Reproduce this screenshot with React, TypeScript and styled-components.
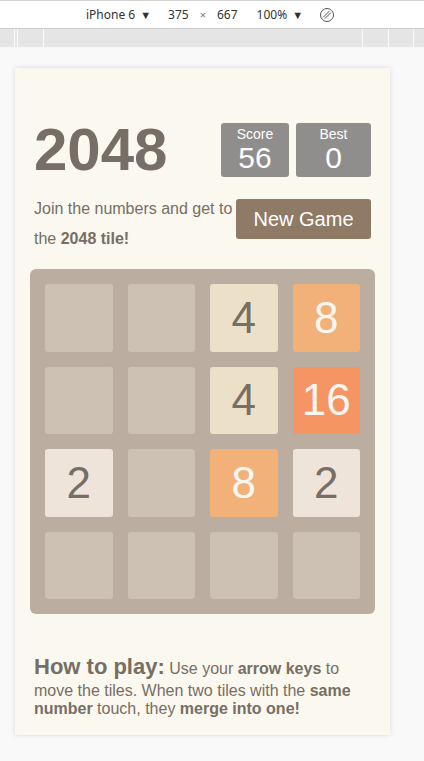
import styled, { createGlobalStyle } from "styled-components";

const GlobalStyle = createGlobalStyle`
  html, body {
    margin: 0;
    padding: 0;
    background: #f9f9f9;
  }
`;

const Page = styled.div`
  width: 424px;
  min-height: 761px;
  background: #f9f9f9;
  overflow: hidden;
`;

const Toolbar = styled.header`
  height: 27px;
  border-top: 1px solid #d2d2d2;
  border-bottom: 1px solid #cdcdcd;
  background: #fff;
  display: flex;
  align-items: center;
  padding-left: 86px;
  font-family: "Noto Sans", "Liberation Sans", sans-serif;
  font-size: 12px;
  color: #333;
`;

const ToolItem = styled.span<{ $gap?: number }>`
  display: inline-flex;
  align-items: center;
  margin-right: ${(p) => p.$gap ?? 0}px;
  white-space: nowrap;
`;

const Caret = styled.span`
  font-size: 11px;
  margin-left: 5px;
`;

const Times = styled.span`
  color: #777;
  font-size: 11px;
`;

const Ruler = styled.div`
  position: relative;
  height: 18px;
  background: #e5e5e5;
`;

const Mark = styled.span`
  position: absolute;
  top: 0;
  bottom: 0;
  width: 1px;
  background: #fbfbfb;
`;

const Stage = styled.div`
  padding-top: 21px;
`;

const Card = styled.main`
  box-sizing: border-box;
  width: 375px;
  height: 667px;
  margin-left: 15px;
  padding: 55px 15px 0;
  background: #faf8ef;
  box-shadow: 0 0 5px rgba(0, 0, 0, 0.13);
  font-family: "Liberation Sans", Arial, sans-serif;
  color: #776e65;
`;

const TopRow = styled.div`
  display: flex;
  justify-content: space-between;
  align-items: center;
  height: 54px;
  padding: 0 4px 0 4px;
`;

const Title = styled.h1`
  margin: 0;
  font-size: 60px;
  line-height: 60px;
  font-weight: bold;
`;

const Scores = styled.div`
  display: flex;
  gap: 7px;
`;

const ScoreBox = styled.div<{ $width: number }>`
  box-sizing: border-box;
  width: ${(p) => p.$width}px;
  height: 54px;
  padding-top: 3px;
  border-radius: 3px;
  background: #908d8d;
  color: #fff;
  text-align: center;
`;

const ScoreLabel = styled.div`
  font-size: 14px;
  line-height: 16px;
`;

const ScoreValue = styled.div`
  font-size: 30px;
  line-height: 32px;
`;

const SubRow = styled.div`
  display: flex;
  justify-content: space-between;
  align-items: flex-start;
  margin-top: 17px;
  padding: 0 4px;
`;

const Intro = styled.p`
  margin: 0;
  width: 200px;
  font-size: 16px;
  line-height: 30px;
`;

const NewGame = styled.button`
  width: 135px;
  height: 40px;
  margin-top: 5px;
  border: none;
  border-radius: 3px;
  background: #8f7a66;
  color: #fff;
  font-family: inherit;
  font-size: 20px;
  padding: 0;
`;

const Board = styled.div`
  box-sizing: border-box;
  width: 345px;
  height: 345px;
  margin-top: 15px;
  padding: 15px;
  display: grid;
  grid-template-columns: repeat(4, 1fr);
  grid-template-rows: repeat(4, 1fr);
  gap: 15px;
  background: #bbada0;
  border-radius: 6px;
`;

const tileColors: Record<number, [string, string]> = {
  0: ["#cdc1b4", "transparent"],
  2: ["#eee4da", "#776e65"],
  4: ["#ede0c8", "#776e65"],
  8: ["#f2b179", "#f9f6f2"],
  16: ["#f59563", "#f9f6f2"],
};

const Tile = styled.div<{ $value: number }>`
  display: flex;
  align-items: center;
  justify-content: center;
  border-radius: 3px;
  background: ${(p) => tileColors[p.$value][0]};
  color: ${(p) => tileColors[p.$value][1]};
  font-size: 44px;
`;

const HowTo = styled.p`
  margin: 39px 4px 0;
  font-size: 16px;
  line-height: 18px;
`;

const HowToHead = styled.strong`
  font-size: 22px;
  line-height: 1.3;
`;

const board = [
  [0, 0, 4, 8],
  [0, 0, 4, 16],
  [2, 0, 8, 2],
  [0, 0, 0, 0],
];

function RotateIcon() {
  return (
    <svg width="16" height="16" viewBox="0 0 16 16" fill="none" stroke="#555" strokeWidth="1">
      <circle cx="8" cy="8" r="6.5" />
      <path d="M4.2 10.3 L10.3 4.2 M5.7 11.8 L11.8 5.7" />
    </svg>
  );
}

export default function App() {
  return (
    <Page>
      <GlobalStyle />
      <Toolbar>
        <ToolItem $gap={17}>
          iPhone 6<Caret>▼</Caret>
        </ToolItem>
        <ToolItem $gap={11}>375</ToolItem>
        <ToolItem $gap={11}>
          <Times>×</Times>
        </ToolItem>
        <ToolItem $gap={19}>667</ToolItem>
        <ToolItem $gap={16}>
          100%<Caret>▼</Caret>
        </ToolItem>
        <ToolItem>
          <RotateIcon />
        </ToolItem>
      </Toolbar>
      <Ruler>
        {[14, 17, 43, 362, 388, 413].map((x) => (
          <Mark key={x} style={{ left: x }} />
        ))}
      </Ruler>
      <Stage>
        <Card>
          <TopRow>
            <Title>2048</Title>
            <Scores>
              <ScoreBox $width={68}>
                <ScoreLabel>Score</ScoreLabel>
                <ScoreValue>56</ScoreValue>
              </ScoreBox>
              <ScoreBox $width={75}>
                <ScoreLabel>Best</ScoreLabel>
                <ScoreValue>0</ScoreValue>
              </ScoreBox>
            </Scores>
          </TopRow>
          <SubRow>
            <Intro>
              Join the numbers and get to the <strong>2048 tile!</strong>
            </Intro>
            <NewGame>New Game</NewGame>
          </SubRow>
          <Board>
            {board.flat().map((v, i) => (
              <Tile key={i} $value={v}>
                {v ? v : ""}
              </Tile>
            ))}
          </Board>
          <HowTo>
            <HowToHead>How to play:</HowToHead> Use your <strong>arrow keys</strong> to
            move the tiles. When two tiles with the <strong>same number</strong> touch,
            they <strong>merge into one!</strong>
          </HowTo>
        </Card>
      </Stage>
    </Page>
  );
}
